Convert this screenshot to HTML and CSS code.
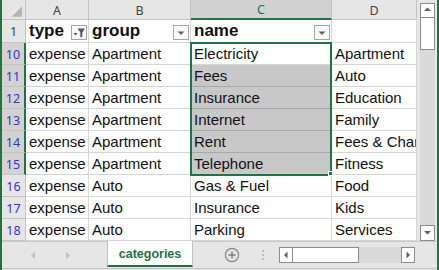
FILE: index.html
```html
<!DOCTYPE html>
<html lang="en">
<head>
    <meta charset="UTF-8">
    <title>categories</title>
    <link rel="stylesheet" href="styles.css">
</head>
<body>
    <div class="window">
        <div class="main">
            <div class="sheet">
                <div class="corner hdr">
                    <svg width="24" height="20" viewBox="0 0 24 20"><polygon points="21,6 21,17 10,17" fill="#b5b5b5"/></svg>
                </div>
                <div class="hdr col">A</div>
                <div class="hdr col">B</div>
                <div class="hdr col sel-col">C</div>
                <div class="hdr col">D</div>

                <div class="hdr row">1</div>
                <div class="cell title">type
                    <span class="drop">
                        <svg width="14" height="13" viewBox="0 0 14 13"><polygon points="1.5,7 5.5,7 3.5,9.5" fill="#555"/><polygon points="5.5,2.5 13,2.5 10.3,6.3 10.3,10.5 8.3,11.5 8.3,6.3" fill="#555"/></svg>
                    </span>
                </div>
                <div class="cell title">group
                    <span class="drop"><svg width="14" height="13" viewBox="0 0 14 13"><polygon points="3.5,5.5 10.5,5.5 7,9" fill="#666"/></svg></span>
                </div>
                <div class="cell title">name
                    <span class="drop"><svg width="14" height="13" viewBox="0 0 14 13"><polygon points="3.5,5.5 10.5,5.5 7,9" fill="#666"/></svg></span>
                </div>
                <div class="cell"></div>

                <div class="hdr row filtered on">10</div>
                <div class="cell">expense</div><div class="cell">Apartment</div><div class="cell active">Electricity</div><div class="cell">Apartment</div>
                <div class="hdr row filtered on">11</div>
                <div class="cell">expense</div><div class="cell">Apartment</div><div class="cell picked">Fees</div><div class="cell">Auto</div>
                <div class="hdr row filtered on">12</div>
                <div class="cell">expense</div><div class="cell">Apartment</div><div class="cell picked">Insurance</div><div class="cell">Education</div>
                <div class="hdr row filtered on">13</div>
                <div class="cell">expense</div><div class="cell">Apartment</div><div class="cell picked">Internet</div><div class="cell">Family</div>
                <div class="hdr row filtered on">14</div>
                <div class="cell">expense</div><div class="cell">Apartment</div><div class="cell picked">Rent</div><div class="cell">Fees &amp; Charges</div>
                <div class="hdr row filtered on">15</div>
                <div class="cell">expense</div><div class="cell">Apartment</div><div class="cell picked">Telephone</div><div class="cell">Fitness</div>
                <div class="hdr row filtered">16</div>
                <div class="cell">expense</div><div class="cell">Auto</div><div class="cell">Gas &amp; Fuel</div><div class="cell">Food</div>
                <div class="hdr row filtered">17</div>
                <div class="cell">expense</div><div class="cell">Auto</div><div class="cell">Insurance</div><div class="cell">Kids</div>
                <div class="hdr row filtered">18</div>
                <div class="cell">expense</div><div class="cell">Auto</div><div class="cell">Parking</div><div class="cell">Services</div>

                <div class="selection"></div>
                <div class="handle"></div>
            </div>
            <div class="vscroll">
                <div class="sbtn"><svg width="13" height="11" viewBox="0 0 13 11"><polygon points="3,7 10,7 6.5,3.5" fill="#606060"/></svg></div>
                <div class="vthumb"></div>
                <div class="vtrack"></div>
                <div class="sbtn"><svg width="13" height="13" viewBox="0 0 13 13"><polygon points="3,5 10,5 6.5,8.5" fill="#606060"/></svg></div>
            </div>
        </div>
        <div class="tabbar">
            <div class="nav">
                <svg width="6" height="9" viewBox="0 0 6 9"><polygon points="5,0.5 5,8.5 1,4.5" fill="#c2c2c2"/></svg>
                <svg width="6" height="9" viewBox="0 0 6 9"><polygon points="1,0.5 1,8.5 5,4.5" fill="#c2c2c2"/></svg>
            </div>
            <div class="tab">categories</div>
            <div class="add">
                <svg width="16" height="16" viewBox="0 0 16 16"><circle cx="8" cy="8" r="6.6" fill="none" stroke="#8a8a8a" stroke-width="1.3"/><path d="M8 4.5v7M4.5 8h7" stroke="#7a7a7a" stroke-width="1.4"/></svg>
            </div>
            <div class="dots"><span></span><span></span><span></span></div>
            <div class="hscroll">
                <div class="hbtn"><svg width="12" height="14" viewBox="0 0 12 14"><polygon points="7.5,3.5 7.5,10.5 4,7" fill="#606060"/></svg></div>
                <div class="hthumb"></div>
                <div class="htrack"></div>
                <div class="hbtn"><svg width="12" height="14" viewBox="0 0 12 14"><polygon points="4.5,3.5 4.5,10.5 8,7" fill="#606060"/></svg></div>
            </div>
        </div>
    </div>
</body>
</html>
```

FILE: styles.css
```css
body {
    margin: 0;
    background: #e6e6e6;
    font-family: "Liberation Sans", Arial, sans-serif;
}

.window {
    width: 435px;
    height: 270px;
    border-left: 2px solid #217346;
    border-right: 2px solid #217346;
    display: flex;
    flex-direction: column;
    overflow: hidden;
    background: #e6e6e6;
}

.main {
    display: flex;
    height: 241px;
}

.sheet {
    position: relative;
    display: grid;
    grid-template-columns: 24px 63px 102px 141px 85px;
    grid-template-rows: 20px 23px repeat(9, 22px);
    background: #fff;
}

.sheet > div {
    box-sizing: border-box;
}

.hdr {
    background: #e6e6e6;
    border-right: 1px solid #c4c4c4;
    border-bottom: 1px solid #c4c4c4;
    font-family: "Noto Sans", sans-serif;
    font-size: 12.5px;
    color: #444;
    display: flex;
    align-items: center;
    justify-content: center;
}

.corner {
    align-items: flex-start;
    justify-content: flex-start;
}

.col {
    padding-top: 1px;
}

.sel-col {
    background: #d2d2d2;
    color: #217346;
    border-bottom: 2px solid #217346;
}

.row {
    padding-top: 1px;
}

.row.filtered {
    color: #3333cc;
}

.row.on {
    background: #d2d2d2;
    border-right: 2px solid #217346;
}

.cell {
    border-right: 1px solid #d6d6d6;
    border-bottom: 1px solid #d6d6d6;
    font-size: 15px;
    line-height: 22px;
    color: #111;
    padding-left: 3px;
    white-space: nowrap;
    overflow: hidden;
}

.title {
    display: flex;
    align-items: center;
    font-size: 17px;
    font-weight: bold;
    line-height: 22px;
}

.drop {
    margin-left: auto;
    margin-right: 1px;
    width: 14px;
    height: 13px;
    border: 1px solid #a6a6a6;
    background: #fafafa;
    display: flex;
    margin-top: 2px;
}

.picked {
    background: #c8c8c8;
    border-bottom-color: #a8a8a8;
}

.selection {
    position: absolute;
    left: 188px;
    top: 42px;
    width: 142px;
    height: 134px;
    border: 2px solid #217346;
    box-sizing: border-box;
    pointer-events: none;
}

.handle {
    position: absolute;
    left: 326px;
    top: 171px;
    width: 5px;
    height: 5px;
    background: #217346;
    border: 1px solid #fff;
}

.vscroll {
    width: 20px;
    display: flex;
    flex-direction: column;
    padding: 3px 2px 0 3px;
    box-sizing: border-box;
}

.sbtn {
    height: 13px;
    border: 1px solid #8c8c8c;
    background: #fff;
    display: flex;
    flex-shrink: 0;
}

.sbtn:last-child {
    height: 14px;
}

.vthumb {
    height: 31px;
    border: 1px solid #8c8c8c;
    border-top: none;
    background: #fff;
    flex-shrink: 0;
}

.vtrack {
    flex: 1;
    background: #dadada;
}

.tabbar {
    display: flex;
    height: 28px;
    border-top: 1px solid #cacaca;
    border-bottom: 1px solid #c2c2c2;
    box-sizing: border-box;
}

.nav {
    width: 105px;
    display: flex;
    align-items: center;
    gap: 29px;
    padding-left: 28px;
    box-sizing: border-box;
}

.tab {
    width: 86px;
    margin-top: -1px;
    margin-bottom: 1px;
    background: #fff;
    border-left: 1px solid #c2c2c2;
    border-right: 1px solid #c2c2c2;
    border-bottom: 2px solid #217346;
    box-sizing: border-box;
    color: #217346;
    font-weight: bold;
    font-size: 12.5px;
    display: flex;
    align-items: center;
    justify-content: center;
    padding-top: 1px;
}

.add {
    margin-left: 31px;
    display: flex;
    align-items: center;
}

.dots {
    margin-left: 22px;
    display: flex;
    flex-direction: column;
    justify-content: center;
    gap: 2px;
}

.dots span {
    width: 2px;
    height: 2px;
    background: #bdbdbd;
}

.hscroll {
    margin-left: 15px;
    margin-top: 5px;
    height: 16px;
    width: 136px;
    display: flex;
}

.hbtn {
    width: 12px;
    border: 1px solid #8c8c8c;
    background: #fff;
    display: flex;
    flex-shrink: 0;
}

.hthumb {
    width: 65px;
    border: 1px solid #8c8c8c;
    border-left: none;
    background: #fff;
}

.htrack {
    flex: 1;
    background: #dadada;
}
```
